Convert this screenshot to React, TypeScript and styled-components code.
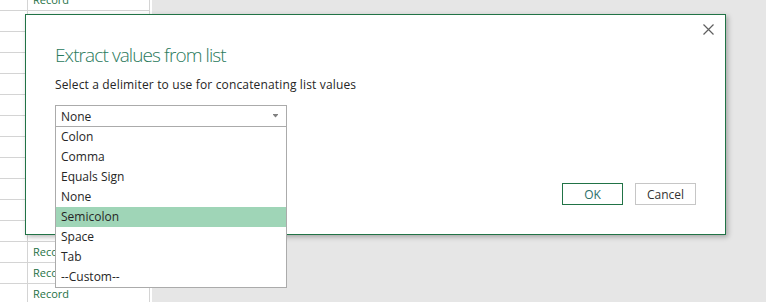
import React from 'react'
import styled, { createGlobalStyle } from 'styled-components'

const GlobalStyle = createGlobalStyle`
  html, body {
    margin: 0;
    padding: 0;
    background: #e6e6e6;
    font-family: 'Open Sans', 'Noto Sans', sans-serif;
  }
`

const Page = styled.div`
  position: relative;
  width: 766px;
  height: 302px;
  overflow: hidden;
  background: #e6e6e6;
`

const Sheet = styled.div`
  width: 152px;
  margin-top: -10px;
  background: #ffffff;
`

const SheetRow = styled.div`
  display: grid;
  grid-template-columns: 28px 122px;
`

const Cell = styled.div`
  height: 20px;
  line-height: 20px;
  border-right: 1px solid #d4d4d4;
  border-bottom: 1px solid #d4d4d4;
  padding-left: 5px;
  font-size: 11px;
  color: #1e7145;
  overflow: hidden;
  white-space: nowrap;
`

const Dialog = styled.div`
  position: absolute;
  left: 25px;
  top: 14px;
  width: 701px;
  height: 221px;
  box-sizing: border-box;
  border: 1px solid #217346;
  background: #ffffff;
  box-shadow: 2px 2px 5px rgba(0, 0, 0, 0.28);
  display: flex;
  flex-direction: column;
  padding: 0 29px 29px 29px;
  z-index: 1;
`

const CloseButton = styled.button`
  position: absolute;
  top: 6px;
  right: 9px;
  width: 16px;
  height: 16px;
  padding: 0;
  border: none;
  background: transparent;
  display: flex;
  align-items: center;
  justify-content: center;
  cursor: pointer;
`

const Title = styled.div`
  margin-top: 26px;
  font-size: 19px;
  line-height: 28px;
  font-weight: 300;
  letter-spacing: -0.9px;
  color: #2a7a5c;
`

const Subtitle = styled.div`
  margin-top: 8px;
  font-size: 12px;
  line-height: 16px;
  letter-spacing: 0.15px;
  color: #262626;
`

const SelectWrap = styled.div`
  position: relative;
  margin-top: 12px;
  width: 232px;
`

const SelectBox = styled.div`
  height: 22px;
  box-sizing: border-box;
  border: 1px solid #ababab;
  display: flex;
  align-items: center;
  justify-content: space-between;
  padding: 0 8px 0 5px;
  font-size: 12px;
  color: #262626;
`

const List = styled.div`
  position: absolute;
  left: 0;
  top: 100%;
  width: 232px;
  box-sizing: border-box;
  border: 1px solid #ababab;
  border-top: none;
  background: #ffffff;
  z-index: 2;
`

const Item = styled.div<{ $active?: boolean }>`
  height: 20px;
  line-height: 20px;
  padding-left: 5px;
  font-size: 12px;
  color: #262626;
  background: ${({ $active }) => ($active ? '#9fd5b7' : 'transparent')};
`

const Footer = styled.div`
  margin-top: auto;
  display: flex;
  justify-content: flex-end;
  gap: 12px;
`

const Button = styled.button<{ $primary?: boolean }>`
  width: 61px;
  height: 22px;
  box-sizing: border-box;
  border: 1px solid ${({ $primary }) => ($primary ? '#217346' : '#c6c6c6')};
  background: #ffffff;
  font-family: inherit;
  font-size: 12px;
  color: ${({ $primary }) => ($primary ? '#2b6f6a' : '#333333')};
  padding: 0;
  cursor: pointer;
`

const options = ['Colon', 'Comma', 'Equals Sign', 'None', 'Semicolon', 'Space', 'Tab', '--Custom--']

// rows hidden behind the dialog are left blank
const visibleRecords = new Set([0, 12, 13, 14])

const App: React.FC = () => {
  const rows = Array.from({ length: 15 })

  return (
    <Page>
      <GlobalStyle />
      <Sheet>
        {rows.map((_, i) => (
          <SheetRow key={i}>
            <Cell />
            <Cell>{visibleRecords.has(i) ? 'Record' : ''}</Cell>
          </SheetRow>
        ))}
      </Sheet>

      <Dialog>
        <CloseButton aria-label="Close">
          <svg width="11" height="11" viewBox="0 0 11 11">
            <path d="M0.5 0.5 L10.5 10.5 M10.5 0.5 L0.5 10.5" stroke="#5f5f5f" strokeWidth="1.2" fill="none" />
          </svg>
        </CloseButton>
        <Title>Extract values from list</Title>
        <Subtitle>Select a delimiter to use for concatenating list values</Subtitle>
        <SelectWrap>
          <SelectBox>
            <span>None</span>
            <svg width="5" height="4" viewBox="0 0 5 4">
              <path d="M0 0 H5 V0.8 L2.5 3.5 L0 0.8 Z" fill="#808080" />
            </svg>
          </SelectBox>
          <List>
            {options.map((o) => (
              <Item key={o} $active={o === 'Semicolon'}>
                {o}
              </Item>
            ))}
          </List>
        </SelectWrap>
        <Footer>
          <Button $primary>OK</Button>
          <Button>Cancel</Button>
        </Footer>
      </Dialog>
    </Page>
  )
}

export default App
